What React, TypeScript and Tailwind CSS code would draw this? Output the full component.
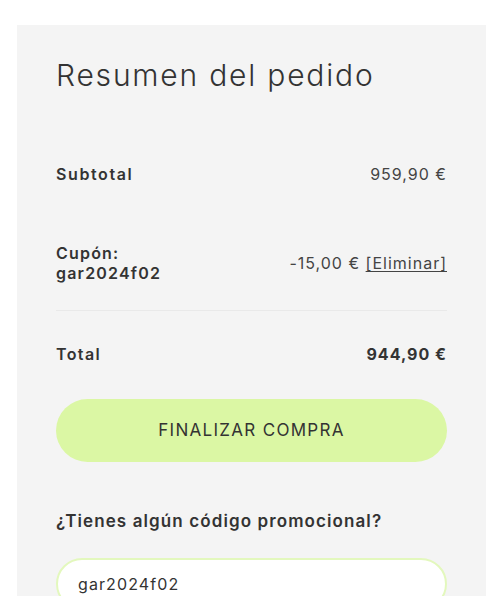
export default function App() {
    return (
        <div className="min-h-[596px] bg-white pt-[25px] pl-[17px]" style={{ fontFamily: "Inter, 'Noto Sans', sans-serif" }}>
            <div className="w-[469px] min-h-[571px] bg-[#f4f4f4] px-[39px] pt-[32px] text-[#333]">
                <h1 className="text-[30px] leading-[36px] font-light tracking-[1.8px]">Resumen del pedido</h1>

                {/* rows */}
                <div className="mt-[71px] flex justify-between text-[16px] leading-[20px]">
                    <span className="font-semibold tracking-[1.6px]">Subtotal</span>
                    <span className="font-normal tracking-[1px] text-[#444]">959,90 €</span>
                </div>

                <div className="mt-[59px] flex justify-between items-center text-[16px] leading-[20px]">
                    <span className="font-semibold tracking-[1.2px]">Cupón:<br />gar2024f02</span>
                    <span className="font-normal tracking-[1px] text-[#444]">-15,00 € <a className="underline underline-offset-2">[Eliminar]</a></span>
                </div>

                <hr className="mt-[27px] border-t border-[#e9e9e9]" />

                <div className="mt-[33px] flex justify-between text-[16px] leading-[20px]">
                    <span className="font-semibold tracking-[1.4px]">Total</span>
                    <span className="font-bold tracking-[1px]">944,90 €</span>
                </div>

                <button className="mt-[35px] w-full h-[63px] rounded-full bg-[#dbf7a4] text-[17px] font-normal tracking-[1.3px] text-[#333] uppercase">
                    Finalizar compra
                </button>

                <p className="mt-[49px] text-[17px] leading-[20px] font-semibold tracking-[1.1px]">¿Tienes algún código promocional?</p>

                <input
                    type="text"
                    defaultValue="gar2024f02"
                    className="mt-[27px] w-full h-[52px] rounded-full border-2 border-[#e3f8bd] bg-white px-[20px] text-[16px] font-normal tracking-[1.1px] text-[#333] outline-none"
                />
            </div>
        </div>
    )
}
